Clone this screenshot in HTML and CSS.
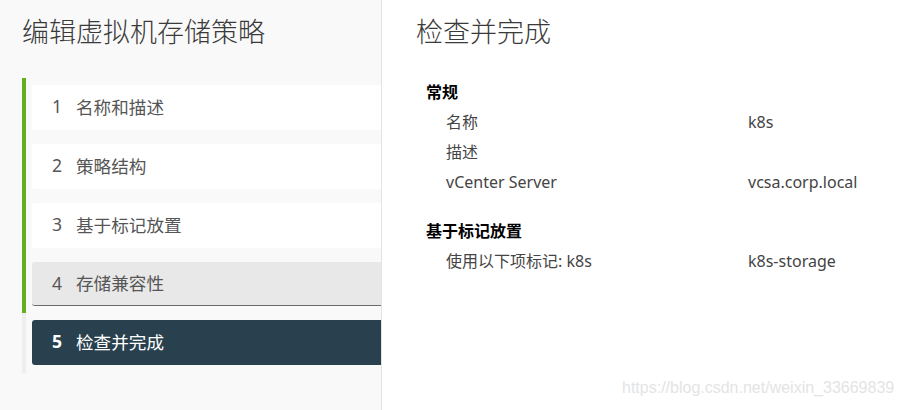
FILE: index.html
```html
<!DOCTYPE html>
<html lang="zh">
<head>
<meta charset="utf-8">
<link rel="stylesheet" href="styles.css">
</head>
<body>
<div class="wizard">
  <aside class="nav">
    <h2 class="nav-title">编辑虚拟机存储策略</h2>
    <div class="steps">
      <div class="step"><span class="num">1</span><span>名称和描述</span></div>
      <div class="step"><span class="num">2</span><span>策略结构</span></div>
      <div class="step"><span class="num">3</span><span>基于标记放置</span></div>
      <div class="step step-hover"><span class="num">4</span><span>存储兼容性</span></div>
      <div class="step step-active"><span class="num">5</span><span>检查并完成</span></div>
    </div>
  </aside>
  <main class="content">
    <h2 class="page-title">检查并完成</h2>
    <section class="group">
      <h3 class="group-title">常规</h3>
      <div class="row"><span class="label">名称</span><span class="value">k8s</span></div>
      <div class="row"><span class="label">描述</span><span class="value"></span></div>
      <div class="row"><span class="label">vCenter Server</span><span class="value">vcsa.corp.local</span></div>
    </section>
    <section class="group">
      <h3 class="group-title">基于标记放置</h3>
      <div class="row"><span class="label">使用以下项标记: k8s</span><span class="value">k8s-storage</span></div>
    </section>
    <div class="watermark">https://blog.csdn.net/weixin_33669839</div>
  </main>
</div>
</body>
</html>
```
FILE: styles.css
```css
* { box-sizing: border-box; }
html, body {
  margin: 0;
  padding: 0;
  width: 904px;
  height: 410px;
  overflow: hidden;
  font-family: "Noto Sans", "Noto Sans CJK SC", sans-serif;
}
.wizard {
  display: flex;
  height: 410px;
}
.nav {
  width: 382px;
  flex: none;
  background: #f9f9f9;
  border-right: 1px solid #e3e3e3;
  padding: 13px 0 0 22px;
}
.nav-title {
  margin: 0;
  font-size: 27px;
  font-weight: 300;
  color: #3a3a3a;
  line-height: 38px;
}
.steps {
  margin-top: 27px;
  border-left: 4px solid #eeeeee;
  padding: 7px 0 8px 6px;
  display: flex;
  flex-direction: column;
  gap: 14px;
  position: relative;
}
.steps::before {
  content: "";
  position: absolute;
  left: -4px;
  top: 0;
  width: 4px;
  height: 235px;
  background: #62b01e;
}
.step {
  height: 45px;
  background: #ffffff;
  border-radius: 3px 0 0 3px;
  display: flex;
  align-items: center;
  padding-left: 20px;
  padding-bottom: 3px;
  font-size: 17.6px;
  color: #565656;
}
.step .num {
  width: 24px;
}
.step-hover {
  background: #e8e8e8;
  border-bottom: 1px solid #6b6b6b;
  height: 44px;
  padding-bottom: 2px;
}
.step-active {
  background: #29414e;
  color: #ffffff;
}
.step-active .num {
  font-weight: 700;
}
.content {
  flex: 1;
  background: #ffffff;
  padding: 13px 0 0 34px;
  position: relative;
}
.page-title {
  margin: 0;
  font-size: 27px;
  font-weight: 300;
  color: #3a3a3a;
  line-height: 38px;
}
.group {
  margin-top: 26px;
  padding-left: 10px;
}
.group + .group {
  margin-top: 19px;
}
.group-title {
  margin: 0;
  font-size: 16px;
  font-weight: 700;
  color: #000000;
  line-height: 30px;
  height: 30px;
}
.row {
  display: flex;
  height: 30px;
  line-height: 30px;
  font-size: 16px;
  color: #444444;
  padding-left: 20px;
}
.label {
  width: 302px;
}
.watermark {
  position: absolute;
  left: 240px;
  top: 379px;
  font-family: "Liberation Sans", sans-serif;
  font-size: 16px;
  color: #e4e4e4;
}
```
